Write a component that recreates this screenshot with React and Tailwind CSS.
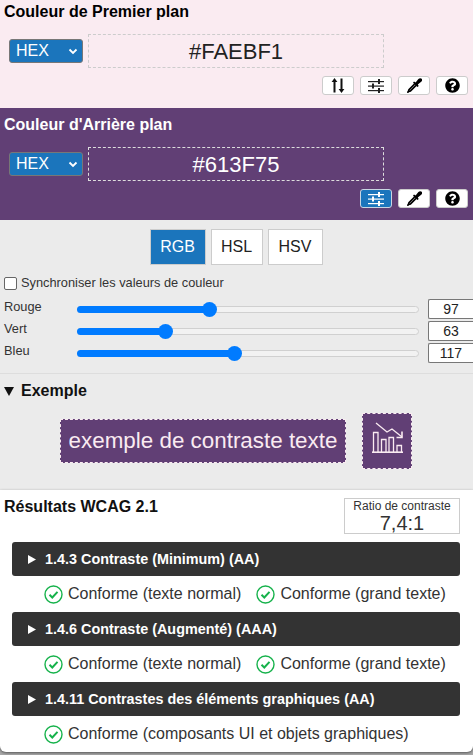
import { FaQuestionCircle } from "react-icons/fa";

const font = "font-['Liberation_Sans',Arial,sans-serif]";

function SlidersIcon({ color = "#222" }) {
  return (
    <svg width="16" height="14" viewBox="0 0 16 14" fill={color}>
      <rect x="0" y="2" width="16" height="1.2" />
      <rect x="0" y="6.5" width="16" height="1.2" />
      <rect x="0" y="11" width="16" height="1.2" />
      <rect x="10" y="0" width="2" height="5" />
      <rect x="4" y="4.5" width="2" height="5" />
      <rect x="10" y="9" width="2" height="5" />
    </svg>
  );
}

function SwapIcon() {
  return (
    <svg width="14" height="15" viewBox="0 0 14 15" fill="#111">
      <path d="M3.5 0 L6.4 4 H4.5 V14.5 H2.5 V4 H0.6 Z" />
      <path d="M10.5 15 L7.6 11 H9.5 V0.5 H11.5 V11 H13.4 Z" />
    </svg>
  );
}

function DropperIcon() {
  return (
    <svg width="15" height="15" viewBox="0 0 15 15">
      <path d="M7 3.6 L8.6 4.4 L11.4 1 C12.4 -0.1 14 0 14.7 0.8 C15.4 1.7 15.2 3 14.2 3.7 L10.8 6.4 L11.7 8 L10.4 9 L6 4.8 Z" fill="#000" />
      <path d="M7.6 6 L2 11.6 L1.4 13.6 L3.4 13 L9 7.4" fill="none" stroke="#000" strokeWidth="1.7" />
      <path d="M1.6 13.4 L0.4 14.6" stroke="#000" strokeWidth="1.4" />
    </svg>
  );
}

function ToolButton({ children, active }) {
  return (
    <button
      className={
        active
          ? "flex h-[19px] w-8 items-center justify-center rounded-[3px] border border-[#c9d6e2] bg-[#1b75bc]"
          : "flex h-[19px] w-8 items-center justify-center rounded-[3px] border border-[#ccc] bg-white"
      }
    >
      {children}
    </button>
  );
}

function ColorPanel({ title, value, dark, swap }) {
  return (
    <section className={dark ? "h-28 bg-[#613f75] text-white" : "h-[108px] bg-[#faebf1] text-black"}>
      <h2 className={dark ? "pl-1 pt-2 text-base leading-[18px] font-bold" : "pl-1 pt-[3px] text-base leading-[18px] font-bold"}>
        {title}
      </h2>
      <div className="mt-[13px] flex items-center pl-[9px]">
        <div className="flex h-6 w-[74px] items-center justify-between rounded-[3px] border border-[#777] bg-[#1b75bc] pl-[6px] pr-[4px] text-base text-white">
          HEX
          <svg width="10" height="7" viewBox="0 0 10 7" fill="none" stroke="white" strokeWidth="1.8">
            <path d="M1.5 1.5 L5 5 L8.5 1.5" />
          </svg>
        </div>
        <div
          className={
            dark
              ? "ml-[5px] flex h-[34px] w-[296px] items-center justify-center border border-dashed border-[#ddd] text-[22px]"
              : "ml-[5px] flex h-[34px] w-[296px] items-center justify-center border border-dashed border-[#ccc] text-[22px] text-[#222]"
          }
        >
          {value}
        </div>
      </div>
      <div className="mt-2 flex justify-end gap-[6px] pr-[5px]">
        {swap && (
          <ToolButton>
            <SwapIcon />
          </ToolButton>
        )}
        <ToolButton active={dark}>
          <SlidersIcon color={dark ? "#fff" : "#222"} />
        </ToolButton>
        <ToolButton>
          <DropperIcon />
        </ToolButton>
        <ToolButton>
          <FaQuestionCircle size={15} color="#000" />
        </ToolButton>
      </div>
    </section>
  );
}

function Slider({ label, value }) {
  const pos = (value / 255) * 328 + 7;
  return (
    <div className="flex h-[22px] items-center text-[12.8px] text-[#333]">
      <span className="-mt-1 w-[77px] pl-1">{label}</span>
      <div className="relative h-[7px] w-[342px] rounded-full border border-[#d0d0d0] bg-[#f2f2f2]">
        <div className="absolute -left-px -top-px h-[7px] rounded-full bg-[#007bff]" style={{ width: pos }} />
        <div className="absolute -top-[5px] h-[15px] w-[15px] rounded-full bg-[#007bff]" style={{ left: pos - 8 }} />
      </div>
      <div className="ml-[9px] flex h-5 w-[45px] items-center justify-center rounded-l-[2px] border border-r-0 border-[#777] bg-white text-sm text-[#222]">
        {value}
      </div>
    </div>
  );
}

function Mode({ label, active, width }) {
  return (
    <div
      className={
        active
          ? "flex h-9 items-center justify-center border border-[#ccc] bg-[#1b75bc] text-base text-white"
          : "flex h-9 items-center justify-center border border-[#ccc] bg-white text-base text-[#222]"
      }
      style={{ width }}
    >
      {label}
    </div>
  );
}

function Check() {
  return (
    <svg width="19" height="19" viewBox="0 0 19 19" fill="none" stroke="#16b24b" className="shrink-0">
      <circle cx="9.5" cy="9.5" r="8.5" strokeWidth="1.4" />
      <path d="M5.5 9.8 L8.3 12.5 L13.5 6.8" strokeWidth="2" />
    </svg>
  );
}

function Pass({ children }) {
  return (
    <span className="flex items-center gap-[5px]">
      <Check />
      {children}
    </span>
  );
}

function Criterion({ title, children }) {
  return (
    <div>
      <div className="flex h-[34px] items-center rounded-[3px] bg-[#333] pl-4 pt-px text-[14.4px] font-bold text-white">
        <svg width="8" height="9" viewBox="0 0 8 9" fill="white" className="mr-[9px]">
          <path d="M0 0 L8 4.5 L0 9 Z" />
        </svg>
        {title}
      </div>
      <div className="flex h-9 items-center gap-[15px] pl-8 text-base text-[#333]">{children}</div>
    </div>
  );
}

export default function App() {
  return (
    <div className={`${font} h-[755px] w-[473px] overflow-hidden bg-[#aaa]`}>
      <ColorPanel title="Couleur de Premier plan" value="#FAEBF1" swap />
      <ColorPanel title="Couleur d'Arrière plan" value="#613F75" dark />

      <section className="h-[270px] bg-[#ebebeb]">
        <div className="flex justify-center gap-[5px] pt-[9px] pr-[1px]">
          <Mode label="RGB" active width={56} />
          <Mode label="HSL" width={52} />
          <Mode label="HSV" width={55} />
        </div>
        <label className="mt-[11px] flex h-[14px] items-center gap-1 pl-1 text-[12.8px] text-[#333]">
          <span className="h-[13px] w-[13px] rounded-[2px] border border-[#666] bg-white" />
          Synchroniser les valeurs de couleur
        </label>
        <div className="mt-2">
          <Slider label="Rouge" value={97} />
          <Slider label="Vert" value={63} />
          <Slider label="Bleu" value={117} />
        </div>
        <div className="mt-[9px] border-t border-[#ddd] pl-1 pt-[9px]">
          <h3 className="flex items-center gap-[7px] text-base leading-4 font-bold text-[#111]">
            <svg width="10" height="9" viewBox="0 0 10 9" fill="#111">
              <path d="M0 0 H10 L5 9 Z" />
            </svg>
            Exemple
          </h3>
        </div>
        <div className="mt-[14px] flex items-center gap-4 pl-[60px]">
          <div className="flex h-11 w-[286px] items-center justify-center border border-dashed border-[#faebf1] bg-[#613f75] text-[22.4px] whitespace-nowrap text-[#faebf1]">
            exemple de contraste texte
          </div>
          <div className="flex h-14 w-[50px] items-center justify-center border border-dashed border-[#faebf1] bg-[#613f75] pb-[7px]">
            <svg width="31" height="31" viewBox="0 0 31 31" fill="none" stroke="#faebf1" strokeWidth="1.3">
              <path d="M0 30.2 H31" strokeWidth="1.6" />
              <path d="M1.5 30 V10.5 H6 V30 M9.5 30 V17.5 H14 V30 M17 30 V15.5 H21.5 V30 M25 30 V23.5 H29.5 V30" />
              <path d="M4 1 L15 10 L20 7 L30 15" />
              <path d="M30 9.5 V15.5 H24.5" strokeWidth="1.6" />
            </svg>
          </div>
        </div>
      </section>

      <section className="h-[262px] rounded-b-[6px] bg-white shadow-[0_1px_3px_rgba(0,0,0,0.5)]">
        <div className="flex justify-between pl-1 pr-[13px] pt-2">
          <h2 className="text-base leading-[18px] font-bold text-[#111]">Résultats WCAG 2.1</h2>
          <div className="flex h-9 w-[116px] flex-col items-center border border-[#ccc] text-[#333]">
            <span className="text-xs leading-[14px]">Ratio de contraste</span>
            <span className="text-xl leading-5">7,4:1</span>
          </div>
        </div>
        <div className="mt-2 px-3 pr-[13px]">
          <Criterion title="1.4.3 Contraste (Minimum) (AA)">
            <Pass>Conforme (texte normal)</Pass>
            <Pass>Conforme (grand texte)</Pass>
          </Criterion>
          <Criterion title="1.4.6 Contraste (Augmenté) (AAA)">
            <Pass>Conforme (texte normal)</Pass>
            <Pass>Conforme (grand texte)</Pass>
          </Criterion>
          <Criterion title="1.4.11 Contrastes des éléments graphiques (AA)">
            <Pass>Conforme (composants UI et objets graphiques)</Pass>
          </Criterion>
        </div>
      </section>
    </div>
  );
}
